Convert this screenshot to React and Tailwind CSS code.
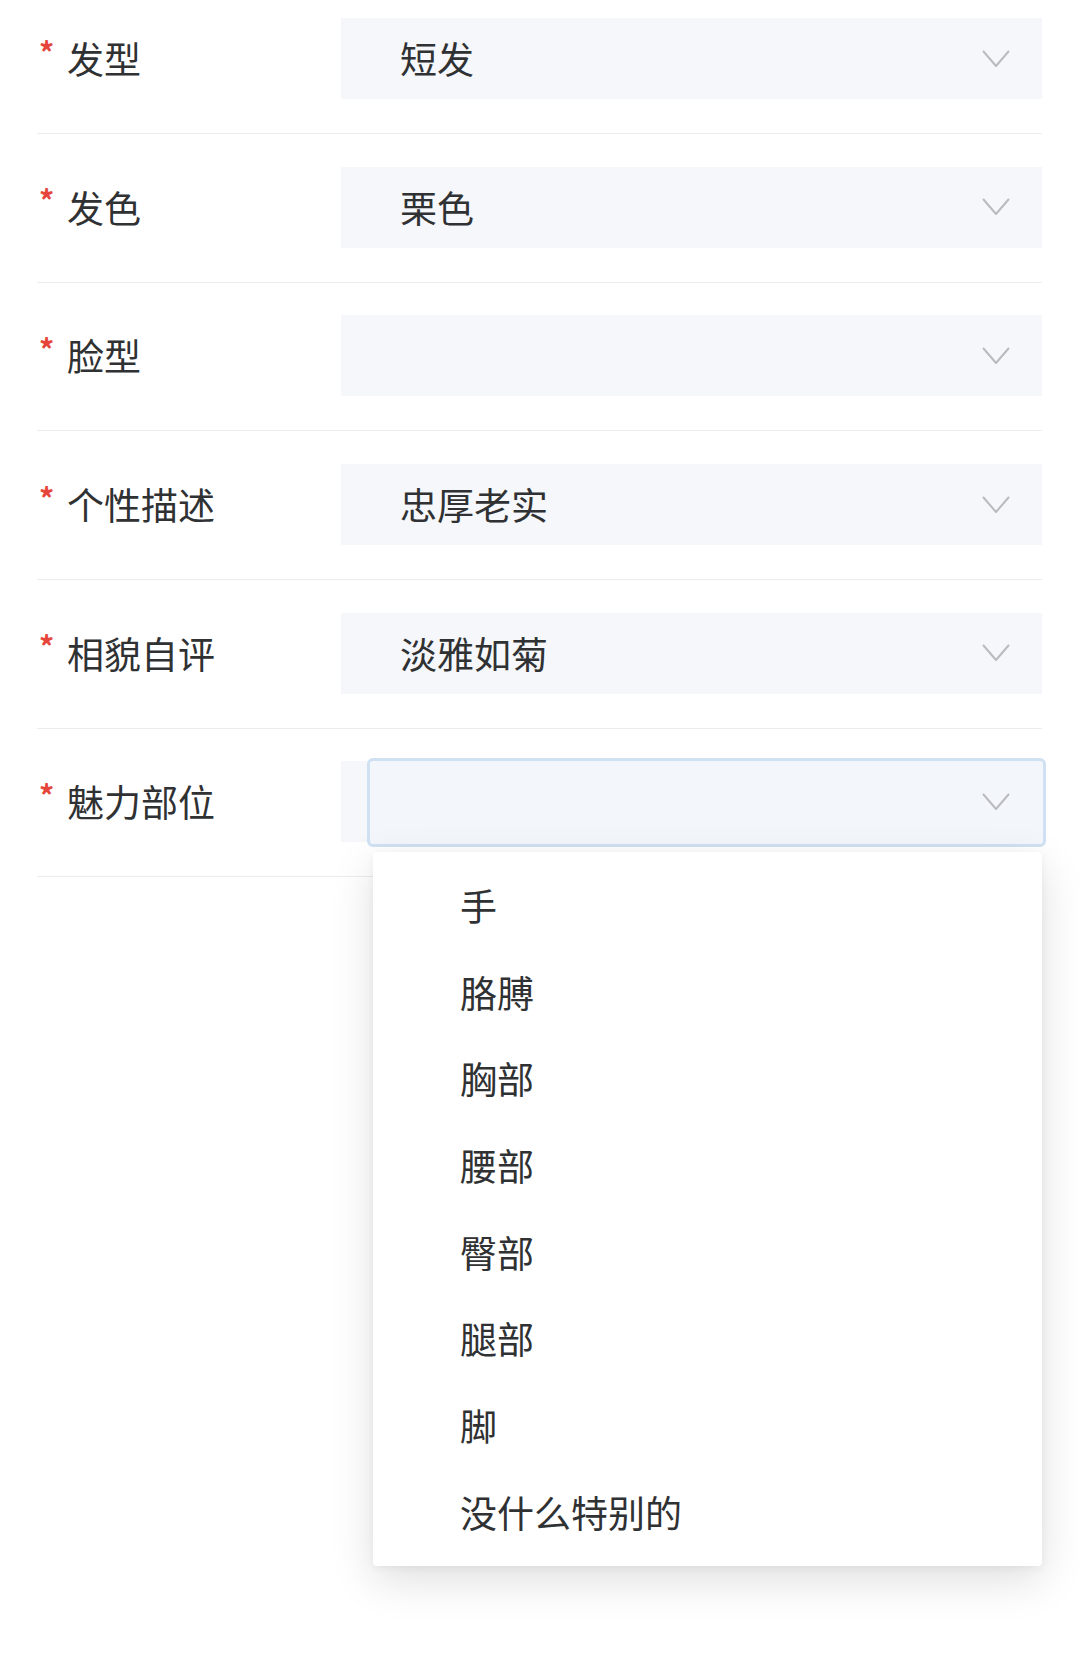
import React from "react";

const fields = [
  { label: "发型", value: "短发" },
  { label: "发色", value: "栗色" },
  { label: "脸型", value: "" },
  { label: "个性描述", value: "忠厚老实" },
  { label: "相貌自评", value: "淡雅如菊" },
  { label: "魅力部位", value: "", open: true },
];

const options = ["手", "胳膊", "胸部", "腰部", "臀部", "腿部", "脚", "没什么特别的"];

// Thin chevron used by every select
const Chevron = () => (
  <svg width="28" height="18" viewBox="0 0 28 18" fill="none" className="block">
    <polyline
      points="1.5,1.5 14,16 26.5,1.5"
      stroke="#b9bbbf"
      strokeWidth="2"
      strokeLinecap="round"
      strokeLinejoin="round"
    />
  </svg>
);

const Dropdown = () => (
  <div className="absolute left-[32px] right-0 top-[91px] z-20 rounded-[4px] bg-white py-[10px] shadow-[0_14px_44px_rgba(0,0,0,0.13),0_2px_8px_rgba(0,0,0,0.05)]">
    {options.map((opt) => (
      <div key={opt} className="flex h-[86.7px] items-center pl-[87px] text-[37px] text-[#303133]">
        {opt}
      </div>
    ))}
  </div>
);

const Select = ({ value, open }) => (
  <div className="relative h-[81px] flex-1 bg-[#f5f7fa]">
    {open && (
      <div className="absolute left-[26px] -right-[4px] -top-[3px] -bottom-[5px] rounded-[6px] border-[3px] border-[#cfe1f2] bg-[#f3f6fa]" />
    )}
    <div className="relative z-10 flex h-full items-center justify-between pl-[59px] pr-[32px]">
      <span className="text-[37px] leading-none text-[#303133]">{value}</span>
      <Chevron />
    </div>
    {open && <Dropdown />}
  </div>
);

export default function App() {
  return (
    <div
      className="min-h-[1678px] w-[1080px] bg-white pl-[37px] pr-[38px]"
      style={{ fontFamily: '"Noto Sans CJK SC", "Noto Sans", sans-serif' }}
    >
      {fields.map((f, i) => (
        <div
          key={f.label}
          className={`flex items-center border-b border-[#ebedf0] pb-[34px] ${i === 0 ? "pt-[18px]" : "pt-[32.7px]"}`}
        >
          <div className="flex w-[304px] items-center">
            <span className="ml-[2px] mb-[16px] w-[28px] text-[30px] font-bold leading-none text-[#e5453b]">*</span>
            <span className="text-[37px] leading-none text-[#303133]">{f.label}</span>
          </div>
          <Select value={f.value} open={f.open} />
        </div>
      ))}
    </div>
  );
}
